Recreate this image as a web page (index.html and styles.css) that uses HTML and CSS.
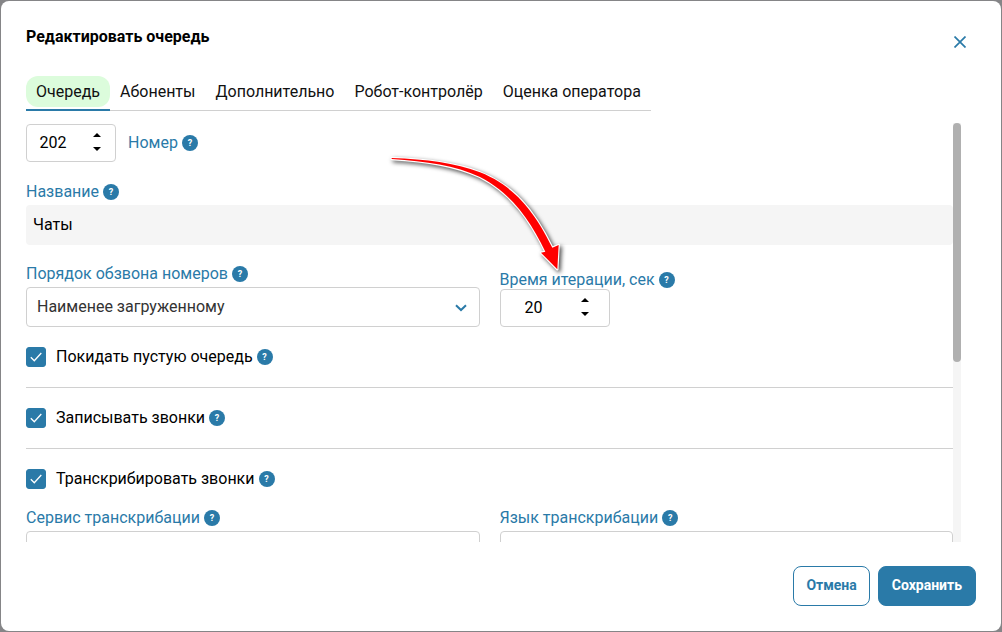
FILE: index.html
```
<!DOCTYPE html>
<html lang="ru">
<head>
    <meta charset="UTF-8">
    <meta name="viewport" content="width=device-width, initial-scale=1.0">
    <title>Редактировать очередь</title>
    <link rel="stylesheet" href="styles.css">
</head>
<body>
    <form class="modal">
        <header class="modal-header">
            <h1>Редактировать очередь</h1>
            <button type="button" class="close" aria-label="Закрыть">
                <svg width="12" height="12" viewBox="0 0 12 12"><path d="M0.5 0.5L11.5 11.5M11.5 0.5L0.5 11.5"/></svg>
            </button>
        </header>

        <nav class="tabs">
            <button type="button" class="tab active"><span>Очередь</span></button>
            <button type="button" class="tab">Абоненты</button>
            <button type="button" class="tab">Дополнительно</button>
            <button type="button" class="tab">Робот-контролёр</button>
            <button type="button" class="tab">Оценка оператора</button>
        </nav>

        <div class="modal-body">
            <div class="scroll-content">
                <div class="number-row">
                    <div class="spinner">
                        <input type="number" id="number" value="202">
                        <div class="spin-buttons">
                            <button type="button" aria-label="Больше"><svg width="8" height="4" viewBox="0 0 8 4"><path d="M4 0L8 4H0z"/></svg></button>
                            <button type="button" aria-label="Меньше"><svg width="8" height="4" viewBox="0 0 8 4"><path d="M0 0H8L4 4z"/></svg></button>
                        </div>
                    </div>
                    <div class="field-label"><label for="number">Номер</label><button type="button" class="help">?</button></div>
                </div>

                <div class="field">
                    <div class="field-label"><label for="name">Название</label><button type="button" class="help">?</button></div>
                    <input type="text" id="name" class="text-input" value="Чаты">
                </div>

                <div class="columns">
                    <div class="field">
                        <div class="field-label"><label for="order">Порядок обзвона номеров</label><button type="button" class="help">?</button></div>
                        <div class="select">
                            <select id="order"><option>Наименее загруженному</option></select>
                            <svg width="12" height="8" viewBox="0 0 12 8"><path d="M1 1.2L6 6L11 1.2"/></svg>
                        </div>
                    </div>
                    <div class="field timeout">
                        <div class="field-label"><label for="timeout">Время итерации, сек</label><button type="button" class="help">?</button></div>
                        <div class="spinner wide">
                            <input type="number" id="timeout" value="20">
                            <div class="spin-buttons">
                                <button type="button" aria-label="Больше"><svg width="8" height="4" viewBox="0 0 8 4"><path d="M4 0L8 4H0z"/></svg></button>
                                <button type="button" aria-label="Меньше"><svg width="8" height="4" viewBox="0 0 8 4"><path d="M0 0H8L4 4z"/></svg></button>
                            </div>
                        </div>
                        <svg class="pointer" width="190" height="125" viewBox="138 39 570 375">
                            <path d="M155 54C260 58 345 68 420 97C520 137 580 208 637 323L656 315L652 388L603 338L616 335C570 240 515 160 420 111C345 76 260 64 155 57z"/>
                        </svg>
                    </div>
                </div>

                <div class="check-row">
                    <span class="check"><input type="checkbox" id="leave" checked><svg width="12" height="10" viewBox="0 0 12 10"><path d="M0.8 5.2L4.3 8.7L11.3 1"/></svg></span>
                    <label for="leave">Покидать пустую очередь</label><button type="button" class="help">?</button>
                </div>
                <hr>
                <div class="check-row">
                    <span class="check"><input type="checkbox" id="record" checked><svg width="12" height="10" viewBox="0 0 12 10"><path d="M0.8 5.2L4.3 8.7L11.3 1"/></svg></span>
                    <label for="record">Записывать звонки</label><button type="button" class="help">?</button>
                </div>
                <hr>
                <div class="check-row">
                    <span class="check"><input type="checkbox" id="transcribe" checked><svg width="12" height="10" viewBox="0 0 12 10"><path d="M0.8 5.2L4.3 8.7L11.3 1"/></svg></span>
                    <label for="transcribe">Транскрибировать звонки</label><button type="button" class="help">?</button>
                </div>

                <div class="columns">
                    <div class="field">
                        <div class="field-label"><label for="service">Сервис транскрибации</label><button type="button" class="help">?</button></div>
                        <div class="select"><select id="service"></select></div>
                    </div>
                    <div class="field">
                        <div class="field-label"><label for="lang">Язык транскрибации</label><button type="button" class="help">?</button></div>
                        <div class="select"><select id="lang"></select></div>
                    </div>
                </div>
            </div>
            <div class="scrollbar"><div class="thumb"></div></div>
        </div>

        <footer class="modal-footer">
            <button type="button" class="btn">Отмена</button>
            <button type="submit" class="btn primary">Сохранить</button>
        </footer>
    </form>
</body>
</html>
```
FILE: styles.css
```
* {
    box-sizing: border-box;
}
body {
    margin: 0;
    padding: 1px;
    height: 100vh;
    background: #858587;
    color: #000;
    font: 16px/20px Roboto, sans-serif;
}
button, input, select {
    font: inherit;
    color: inherit;
    margin: 0;
}
button {
    padding: 0;
    border: none;
    background: none;
    cursor: pointer;
}
svg {
    display: block;
    fill: none;
}
.modal {
    display: flex;
    flex-direction: column;
    height: 100%;
    padding: 25px;
    background: #fff;
    border-radius: 8px;
}
.modal-header {
    display: flex;
    justify-content: space-between;
    margin-bottom: 18px;
}
h1 {
    margin: 0;
    font-size: 16px;
    font-weight: 700;
    line-height: 22px;
}
.close {
    display: grid;
    place-items: center;
    width: 32px;
    height: 32px;
}
.close svg {
    stroke: #2a7aa8;
    stroke-width: 1.7;
}

/* Tabs */
.tabs {
    display: flex;
    align-self: flex-start;
    margin-bottom: 12px;
    box-shadow: inset 0 -1px #d0d0d0;
}
.tab {
    height: 35px;
    padding: 0 10px 4px;
    color: #111;
}
.tab.active {
    padding: 0 0 2px;
    border-bottom: 2px solid #2a7aa8;
}
.tab.active span {
    display: block;
    padding: 6px 10px 5px;
    background: #dcfcdc;
    border-radius: 12px;
}

/* Scrolling form */
.modal-body {
    display: flex;
    flex: 1;
    min-height: 0;
    margin-right: 15px;
}
.scroll-content {
    flex: 1;
    min-width: 0;
    padding-bottom: 289px;
    overflow-y: auto;
    scrollbar-width: none;
}
.scrollbar {
    width: 8px;
    background: #f5f5f5;
}
.thumb {
    height: 57%;
    background: #b0b0b0;
    border-radius: 4px;
}
.number-row {
    display: flex;
    align-items: center;
    gap: 12px;
    height: 40px;
}
.field {
    margin-top: 16px;
}
.field-label {
    display: flex;
    align-items: center;
    gap: 4px;
    height: 26px;
    color: #2a7aa8;
}
.help {
    flex: none;
    width: 16px;
    height: 16px;
    background: #2a7aa8;
    border-radius: 50%;
    color: #fff;
    font-size: 9px;
    font-weight: 700;
    line-height: 16px;
}
.text-input {
    display: block;
    width: 100%;
    height: 40px;
    padding: 0 7px 2px;
    border: none;
    border-radius: 4px;
    background: #f5f5f5;
}
.columns {
    display: grid;
    grid-template-columns: 1fr 1fr;
    gap: 20px;
}
.select {
    position: relative;
}
.select select {
    display: block;
    width: 100%;
    height: 40px;
    padding: 0 10px;
    appearance: none;
    background: #fff;
    border: 1px solid #d0d0d0;
    border-radius: 4px;
    color: #333;
}
.select svg {
    position: absolute;
    right: 13px;
    top: 17px;
    stroke: #2a7aa8;
    stroke-width: 2;
    pointer-events: none;
}

/* Number box with its own arrows */
.spinner {
    display: flex;
    width: 90px;
    height: 38px;
    border: 1px solid #d0d0d0;
    border-radius: 4px;
}
.spinner.wide {
    width: 110px;
    padding-right: 6px;
}
.spinner input {
    flex: 1;
    min-width: 0;
    padding: 0;
    border: none;
    background: none;
    text-align: center;
    appearance: textfield;
}
.spinner input::-webkit-inner-spin-button {
    display: none;
}
.spin-buttons {
    display: flex;
    flex-direction: column;
    justify-content: center;
    gap: 2px;
    width: 36px;
    padding-bottom: 2px;
}
.spin-buttons button {
    display: grid;
    place-items: center;
    height: 12px;
}
.spin-buttons svg {
    fill: #000;
}
.timeout {
    position: relative;
    align-self: end;
}
.timeout .field-label {
    height: 18px;
}
.pointer {
    position: absolute;
    left: -114px;
    bottom: 49px;
    overflow: visible;
    fill: #f00;
    stroke: #fff;
    stroke-width: 7;
    stroke-linejoin: round;
    paint-order: stroke;
    filter: drop-shadow(2px 2px 2px rgba(0, 0, 0, 0.7));
    pointer-events: none;
}

/* Checkboxes */
.check-row {
    display: flex;
    align-items: center;
    gap: 4px;
    margin-top: 20px;
}
.check {
    position: relative;
    margin-right: 6px;
}
.check input {
    display: block;
    width: 20px;
    height: 20px;
    appearance: none;
    border: 1px solid #2a7aa8;
    border-radius: 3px;
}
.check input:checked {
    background: #2a7aa8;
}
.check svg {
    position: absolute;
    left: 4px;
    top: 5px;
    stroke: #fff;
    stroke-width: 1.3;
    pointer-events: none;
}
hr {
    height: 1px;
    margin: 20px 0 0;
    border: none;
    background: #d0d0d0;
}

.modal-footer {
    display: flex;
    justify-content: flex-end;
    gap: 8px;
    padding-top: 24px;
}
.btn {
    height: 40px;
    padding: 0 12px 2px;
    border: 1px solid #2a7aa8;
    border-radius: 8px;
    background: #fff;
    color: #2a7aa8;
    font-size: 14px;
    font-weight: 700;
}
.btn.primary {
    padding: 0 13px 2px;
    background: #2a7aa8;
    color: #fff;
}
```
